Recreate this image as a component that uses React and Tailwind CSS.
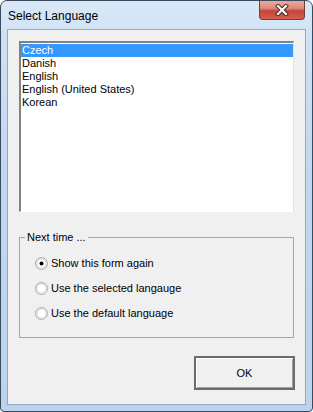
import { useState } from 'react'

const languages = ['Czech', 'Danish', 'English', 'English (United States)', 'Korean']
const options = ['Show this form again', 'Use the selected langauge', 'Use the default language']

export default function App() {
  const [selected, setSelected] = useState(0)
  const [choice, setChoice] = useState(0)

  return (
    <div className="h-[412px] w-[313px] bg-white" style={{ fontFamily: '"Liberation Sans", Arial, sans-serif' }}>
      <div className="flex h-full w-full flex-col rounded-t-[7px] rounded-b-[4px] border border-[#3a4a5e] bg-[linear-gradient(180deg,#dae9f8_0%,#cfe2f5_8%,#c2d8f0_40%,#bcd3ee_100%)] px-[6px] pb-[6px]">
        {/* Title bar */}
        <div className="flex h-[28px] shrink-0 items-start justify-between">
          <span className="pl-[1px] pt-[8px] text-[12px] leading-[14px] text-black">Select Language</span>
          <CloseButton />
        </div>

        {/* Client area */}
        <div className="flex flex-1 flex-col border border-[#93a8c2] bg-[#f0f0f0] px-[11px] pt-[11px]">
          <div className="h-[171px] border-t-2 border-l-2 border-r border-b border-t-[#828282] border-l-[#828282] border-r-[#e3e3e3] border-b-[#ffffff] bg-white pt-[1px]">
            {languages.map((l, i) => (
              <div
                key={l}
                onClick={() => setSelected(i)}
                className={`h-[13px] px-[1px] text-[11px] leading-[13px] ${
                  i === selected ? 'bg-[#3399ff] text-white' : 'text-black'
                }`}
              >
                {l}
              </div>
            ))}
          </div>

          <fieldset className="mt-[19px] h-[107px] border border-[#a5a5a5] pl-[15px] pr-2">
            <legend className="-ml-[10px] px-[2px] text-[11px] leading-[13px] text-black">Next time ...</legend>
            <div className="flex flex-col gap-[12px] pt-[13px]">
              {options.map((o, i) => (
                <label key={o} className="flex cursor-default items-center gap-[3px] text-[11px] leading-[13px] text-black" onClick={() => setChoice(i)}>
                  <Radio checked={i === choice} />
                  {o}
                </label>
              ))}
            </div>
          </fieldset>

          <div className="flex justify-end pt-[18px]">
            <button className="mr-[-1px] h-[34px] w-[101px] border-2 border-[#6b6b6b] bg-[#f0f0f0] text-[11px] text-black shadow-[inset_1px_1px_0_#ffffff,inset_-1px_-1px_0_#a0a0a0]">
              OK
            </button>
          </div>
        </div>
      </div>
    </div>
  )
}

function Radio({ checked }) {
  return (
    <svg width="13" height="13" viewBox="0 0 13 13" aria-hidden="true">
      <defs>
        <linearGradient id="rg" x1="0" y1="0" x2="1" y2="1">
          <stop offset="0" stopColor="#e6e6e6" />
          <stop offset="1" stopColor="#ffffff" />
        </linearGradient>
      </defs>
      <circle cx="6.5" cy="6.5" r="6" fill="url(#rg)" stroke="#a8a8a8" />
      <circle cx="6.5" cy="6.5" r="4.5" fill="#fff" stroke="#d8d8d8" />
      {checked && <circle cx="6.5" cy="6.5" r="2" fill="#000" />}
    </svg>
  )
}

function CloseButton() {
  return (
    <div className="mr-[1px] flex h-[19px] w-[46px] items-center justify-center rounded-b-[4px] border border-t-0 border-[#7a3a36] bg-[linear-gradient(180deg,#e9a99b_0%,#dd8a7a_40%,#c3453a_55%,#d55f4c_100%)]">
      <svg width="14" height="12" viewBox="0 0 14 12" aria-hidden="true">
        <path d="M3 2 L11 10 M11 2 L3 10" stroke="#3b2220" strokeWidth="4" strokeLinecap="square" />
        <path d="M3 2 L11 10 M11 2 L3 10" stroke="#ffffff" strokeWidth="2.2" strokeLinecap="square" />
      </svg>
    </div>
  )
}
